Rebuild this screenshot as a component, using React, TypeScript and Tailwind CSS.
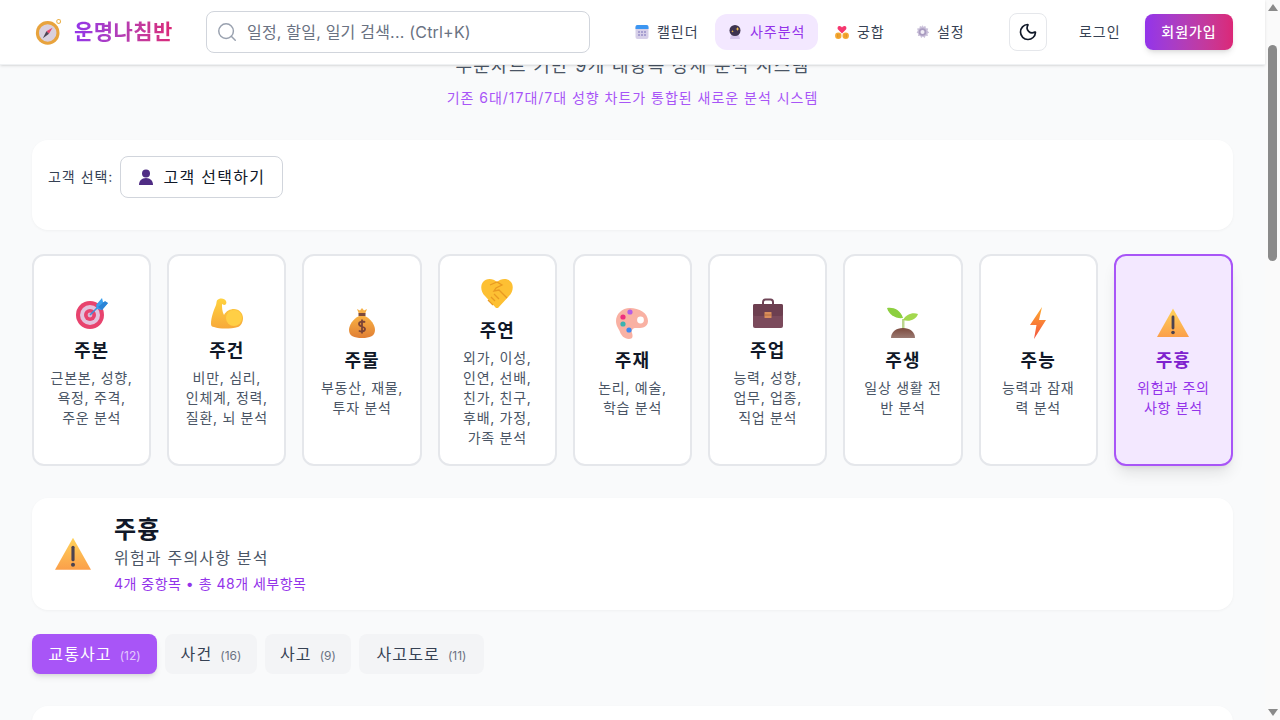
import { Moon, Search } from 'lucide-react';

const CategoryIcons: Record<string, JSX.Element> = {
  target: (
    <svg viewBox="0 0 32 32" className="w-8 h-8">
      <circle cx="14" cy="18" r="14" fill="#e8436e" />
      <circle cx="14" cy="18" r="10" fill="#e3c3de" />
      <circle cx="14" cy="18" r="6" fill="#e8436e" />
      <circle cx="14" cy="18" r="2.4" fill="#d9b6d4" />
      <path d="M14 18 24 8" stroke="#3f8fd8" strokeWidth="1.6" />
      <path d="M20 8 26 1l1 4 5 1-6 7-5-1z" fill="#3aa0ee" />
      <path d="M22 10 29 4l3 2-6 7z" fill="#2b84d6" />
    </svg>
  ),
  arm: (
    <svg viewBox="0 0 32 32" className="w-8 h-8">
      <defs>
        <linearGradient id="armFill" x1="0" y1="0" x2="0" y2="1">
          <stop offset="0" stopColor="#ffd23f" />
          <stop offset="1" stopColor="#f7a93a" />
        </linearGradient>
      </defs>
      <path d="M0 27C0 20 3 13 5 8c1-3 0-5 3-6 3-1 6 0 7 2 1 2 0 4-2 4l-2-1c0 4 0 7 2 11 2-4 6-6 10-6 5 0 9 4 9 9 0 4-2 8-5 9-8 2-18 2-24 0-2 0-3-1-3-3z" fill="url(#armFill)" />
      <circle cx="23" cy="21" r="8" fill="#ffcf45" />
    </svg>
  ),
  money: (
    <svg viewBox="0 0 32 32" className="w-8 h-8">
      <defs>
        <linearGradient id="bagFill" x1="0" y1="0" x2="0" y2="1">
          <stop offset="0" stopColor="#f9b143" />
          <stop offset="1" stopColor="#e07f35" />
        </linearGradient>
      </defs>
      <path d="M11 2l3 1.500L16 1l2 2.500L21 2l-2 5h-6z" fill="#f7b046" />
      <rect x="12.500" y="6" width="7" height="3" fill="#7d4a3a" />
      <path d="M13 9h6c6 3 10 9 10 14 0 6-5 8-13 8S3 29 3 23C3 18 7 12 13 9z" fill="url(#bagFill)" />
      <path d="M19 15.500c-1-1.500-6-1.500-6 1.500s6 2 6 5-5 3-6 1.500M16 12.500v14" stroke="#7b4336" strokeWidth="1.800" fill="none" />
    </svg>
  ),
  shake: (
    <svg viewBox="0 0 32 32" className="w-8 h-8">
      <path d="M16 5C20 1 27 1 30 5c3 4 2 10-2 14L17 31h-2L4 19C0 15-1 9 2 5c3-4 10-4 14 0z" fill="#fdc033" />
      <path d="M9 8l7-3 5 3-6 3-2 3 5-1 8 8M10 20l4 4M13 17l5 5M7 23l5 5" stroke="#e99a22" strokeWidth="1.300" fill="none" />
    </svg>
  ),
  palette: (
    <svg viewBox="0 0 32 32" className="w-8 h-8">
      <path d="M14 1C6 1 0 7 0 14c0 5 3 8 4 11 1 3 4 7 9 7 4 0 4-3 3-6-1-3 1-5 4-5 5 0 12 0 12-7C32 6 23 1 14 1z" fill="#f9b1a3" />
      <circle cx="24.500" cy="13" r="3.400" fill="#fff" />
      <circle cx="14" cy="5" r="2.600" fill="#b45ce6" />
      <circle cx="7" cy="10" r="2.600" fill="#ee2f7f" />
      <circle cx="7" cy="17" r="2.600" fill="#3bb3b0" />
      <circle cx="13" cy="23" r="2.600" fill="#3b88f0" />
    </svg>
  ),
  case: (
    <svg viewBox="0 0 32 32" className="w-8 h-8">
      <path d="M11 8V5c0-1.500 1-2.500 2.500-2.500h5C20 2.500 21 3.500 21 5v3" stroke="#6f4557" strokeWidth="2" fill="none" />
      <rect x="1" y="7" width="30" height="24" rx="2" fill="#7b4a5c" />
      <rect x="1" y="7" width="30" height="12" rx="2" fill="#6d3f50" />
      <rect x="12.500" y="15" width="7" height="6" rx="0.500" fill="#d98d5b" />
      <path d="M12.500 18h7" stroke="#b26a3f" />
    </svg>
  ),
  sprout: (
    <svg viewBox="0 0 32 32" className="w-8 h-8">
      <defs>
        <linearGradient id="soilFill" x1="0" y1="0" x2="0" y2="1">
          <stop offset="0" stopColor="#7c4a3e" />
          <stop offset="1" stopColor="#9b7a72" />
        </linearGradient>
      </defs>
      <path d="M15 12h2.500v10H15z" fill="#bcd68f" />
      <path d="M0 1c6-1 13 1 16 10C9 12 2 8 0 1z" fill="#8ccf3f" />
      <path d="M31 7c-5-2-12 0-15 6 6 2 13 0 15-6z" fill="#a3d84e" />
      <path d="M4 31c0-6 5-10 12-10s12 4 12 10z" fill="url(#soilFill)" />
    </svg>
  ),
  bolt: (
    <svg viewBox="0 0 32 32" className="w-8 h-8">
      <defs>
        <linearGradient id="boltFill" x1="0" y1="0" x2="0" y2="1">
          <stop offset="0" stopColor="#fdab2f" />
          <stop offset="1" stopColor="#f4523f" />
        </linearGradient>
      </defs>
      <path d="M20 0 8 18h6.500L12 32l12-19h-7z" fill="url(#boltFill)" />
    </svg>
  ),
};

function Warning({ className }: { className: string }) {
  return (
    <svg viewBox="0 0 32 32" className={className}>
      <defs>
        <linearGradient id="warnFill" x1="0" y1="0" x2="0" y2="1">
          <stop offset="0" stopColor="#ffd35a" />
          <stop offset="1" stopColor="#fb9f4a" />
        </linearGradient>
      </defs>
      <path d="M16 1.500 32 30H0z" fill="url(#warnFill)" />
      <path d="M16 10v11" stroke="#4b4350" strokeWidth="2.800" strokeLinecap="round" />
      <circle cx="16" cy="25.500" r="1.800" fill="#4b4350" />
    </svg>
  );
}

const categories = [
  { name: '주본', desc: '근본본, 성향, 욕정, 주격, 주운 분석', icon: CategoryIcons.target },
  { name: '주건', desc: '비만, 심리, 인체계, 정력, 질환, 뇌 분석', icon: CategoryIcons.arm },
  { name: '주물', desc: '부동산, 재물, 투자 분석', icon: CategoryIcons.money },
  { name: '주연', desc: '외가, 이성, 인연, 선배, 친가, 친구, 후배, 가정, 가족 분석', icon: CategoryIcons.shake },
  { name: '주재', desc: '논리, 예술, 학습 분석', icon: CategoryIcons.palette },
  { name: '주업', desc: '능력, 성향, 업무, 업종, 직업 분석', icon: CategoryIcons.case },
  { name: '주생', desc: '일상 생활 전반 분석', icon: CategoryIcons.sprout },
  { name: '주능', desc: '능력과 잠재력 분석', icon: CategoryIcons.bolt },
];

const tabs = [
  { name: '교통사고', count: 12, width: 'w-[125px]', active: true },
  { name: '사건', count: 16, width: 'w-[92px]' },
  { name: '사고', count: 9, width: 'w-[86px]' },
  { name: '사고도로', count: 11, width: 'w-[125px]' },
];

function CalendarIcon() {
  return (
    <svg viewBox="0 0 16 16" className="w-4 h-4">
      <rect x="1.500" y="1" width="13" height="14" rx="2" fill="#d6cfe8" />
      <path d="M1.500 3a2 2 0 0 1 2-2h9a2 2 0 0 1 2 2v2h-13z" fill="#3b96f2" />
      <path d="M4 7h2v2H4zm3 0h2v2H7zm3 0h2v2h-2zm-6 3h2v2H4zm3 0h2v2H7zm3 0h2v2h-2z" fill="#a79fd0" />
    </svg>
  );
}

function BallIcon() {
  return (
    <svg viewBox="0 0 16 16" className="w-4 h-4">
      <path d="M4 11h8l1 4H3z" fill="#d8c8ee" />
      <circle cx="8" cy="6.500" r="5.500" fill="#3d3350" />
      <path d="M10.500 3l.7 1.500 1.500.5-1.500.6-.7 1.400-.6-1.400L8.500 5l1.400-.5zM5.500 6l.4.900.9.400-.9.400-.4.900-.4-.9-.9-.4.9-.4z" fill="#f2c14e" />
    </svg>
  );
}

function HeartHandsIcon() {
  return (
    <svg viewBox="0 0 16 16" className="w-4 h-4">
      <path d="M8 9.500 4.300 5.800C3 4.500 3.500 2 5.500 2 6.800 2 7.600 2.800 8 3.600 8.400 2.800 9.200 2 10.500 2c2 0 2.500 2.500 1.200 3.800z" fill="#f5376f" />
      <circle cx="4.300" cy="11.800" r="3.200" fill="#f5a833" />
      <circle cx="11.700" cy="11.800" r="3.200" fill="#f5a833" />
      <path d="M3.500 10v3.500M5 10v3.500M11 10v3.500M12.500 10v3.500" stroke="#d98a1f" strokeWidth="0.600" />
    </svg>
  );
}

function GearIcon() {
  return (
    <svg viewBox="0 0 16 16" className="w-4 h-4">
      <path d="M8 .800l1.200 2 2.200-.9.500 2.300 2.300.4-.7 2.200L15.200 8.500l-1.800 1.200.5 2.200-2.300-.1-.9 2.100L8.800 12.500 7.100 13.900l-.9-2.100-2.300.1.500-2.200L2.600 8.500l1.200-1.700-.7-2.200 2.300-.4.500-2.300 2.200.9z" fill="#c9bfd9" />
      <circle cx="8.500" cy="8" r="3.800" fill="#a99cc0" />
      <circle cx="8.500" cy="8" r="2" fill="#f0ecf4" />
    </svg>
  );
}

function CompassIcon() {
  return (
    <svg viewBox="0 0 32 32" className="w-[28px] h-[28px]">
      <circle cx="27" cy="4" r="2.200" fill="none" stroke="#eab04a" strokeWidth="1.200" />
      <circle cx="14.500" cy="17" r="13.500" fill="#e8a33d" />
      <circle cx="14.500" cy="17" r="10" fill="#d9d0de" />
      <path d="M20 11 16 18l-3-3z" fill="#e8456b" />
      <path d="M9 23l4-8 3 3z" fill="#4b4453" />
    </svg>
  );
}

function BustIcon() {
  return (
    <svg viewBox="0 0 16 16" className="w-4 h-4">
      <circle cx="8" cy="4.500" r="4" fill="#4f2c84" />
      <path d="M1 16c0-4 2.500-7 7-7s7 3 7 7z" fill="#4f2c84" />
    </svg>
  );
}

export default function App() {
  return (
    <div className="flex h-[720px] overflow-hidden bg-[#f9fafb] text-gray-900 font-['Inter','Noto_Sans_CJK_KR',sans-serif]">
      <div className="flex flex-col flex-1 min-w-0">
        <header className="relative z-10 h-[65px] shrink-0 bg-white border-b border-gray-200/60 shadow-sm flex items-center pl-[35px] pr-8">
          <div className="flex items-center gap-[11px] w-[171px] shrink-0">
            <CompassIcon />
            <span className="text-[21px] tracking-[0.02em] font-bold bg-gradient-to-r from-[#9333ea] to-[#db2777] bg-clip-text text-transparent whitespace-nowrap">
              운명나침반
            </span>
          </div>
          <div className="w-[384px] h-[42px] border border-gray-300 rounded-lg flex items-center pl-[9px] gap-[9px] shrink-0">
            <Search className="w-[22px] h-[22px] text-gray-400" strokeWidth={1.6} />
            <span className="text-base tracking-[0.2px] text-gray-500 whitespace-nowrap">일정, 할일, 일기 검색... (Ctrl+K)</span>
          </div>
          <nav className="flex items-center gap-1 ml-8 shrink-0 text-sm tracking-[0.07em]">
            <a className="w-[89px] h-9 flex items-center gap-[7px] pl-3 rounded-xl text-gray-700 whitespace-nowrap">
              <CalendarIcon /> 캘린더
            </a>
            <a className="w-[103px] h-9 flex items-center gap-[7px] pl-3 rounded-xl text-[#9333ea] bg-[#f3e8ff] whitespace-nowrap">
              <BallIcon /> 사주분석
            </a>
            <a className="w-[76px] h-9 flex items-center gap-[7px] pl-3 rounded-xl text-gray-700 whitespace-nowrap">
              <HeartHandsIcon /> 궁합
            </a>
            <a className="w-[75px] h-9 flex items-center gap-[7px] pl-3 rounded-xl text-gray-700 whitespace-nowrap">
              <GearIcon /> 설정
            </a>
          </nav>
          <button className="ml-8 w-[38px] h-[38px] shrink-0 border border-gray-200 rounded-lg flex items-center justify-center">
            <Moon className="w-5 h-5 text-gray-900" />
          </button>
          <a className="ml-8 w-[42px] text-sm tracking-[0.07em] text-gray-700 whitespace-nowrap">로그인</a>
          <button className="ml-6 w-[88px] h-9 shrink-0 rounded-lg bg-gradient-to-r from-[#9333ea] to-[#db2777] text-white text-sm tracking-[0.07em] font-medium shadow-md whitespace-nowrap">
            회원가입
          </button>
        </header>

        <main className="flex-1 min-h-0 overflow-hidden px-8">
          <p className="-mt-[13px] text-lg leading-7 tracking-[0.072em] text-gray-600 text-center">
            부분차트 기반 9개 대항목 상세 분석 시스템
          </p>
          <p className="mt-2 text-sm leading-5 tracking-[0.07em] text-[#a855f7] text-center">
            기존 6대/17대/7대 성향 차트가 통합된 새로운 분석 시스템
          </p>

          <section className="mt-8 h-[90px] bg-white rounded-2xl shadow-[0_1px_3px_rgba(0,0,0,0.04)] p-4 flex items-start gap-[7px]">
            <span className="text-sm tracking-[0.07em] text-gray-700 leading-[42px]">고객 선택:</span>
            <button className="h-[42px] w-[163px] border border-gray-300 rounded-lg flex items-center justify-center gap-[9px] text-base tracking-[0.08em] text-gray-900 bg-white">
              <BustIcon /> 고객 선택하기
            </button>
          </section>

          <section className="mt-6 grid grid-cols-9 gap-4">
            {categories.map((c) => (
              <div key={c.name} className="bg-white border-2 border-gray-200 rounded-xl p-4 flex flex-col items-center justify-center text-center">
                <div className="h-10 mb-2 pt-[5px] flex items-start">{c.icon}</div>
                <h3 className="text-lg leading-[22px] pb-[6px] tracking-[0.06em] font-bold text-gray-900">{c.name}</h3>
                <p className="text-sm leading-5 tracking-[0.05em] text-gray-600">{c.desc}</p>
              </div>
            ))}
            <div className="bg-[#f3e8ff] border-2 border-[#a855f7] rounded-xl p-4 shadow-lg flex flex-col items-center justify-center text-center">
              <div className="h-10 mb-2 pt-[5px] flex items-start">
                <Warning className="w-8 h-8" />
              </div>
              <h3 className="text-lg leading-[22px] pb-[6px] tracking-[0.06em] font-bold text-[#7e22ce]">주흉</h3>
              <p className="text-sm leading-5 tracking-[0.05em] text-[#9333ea]">위험과 주의사항 분석</p>
            </div>
          </section>

          <section className="mt-8 bg-white rounded-2xl shadow-[0_1px_3px_rgba(0,0,0,0.04)] py-4 pl-[23px] flex items-center gap-[23px]">
            <Warning className="w-9 h-9 shrink-0" />
            <div>
              <h2 className="text-2xl leading-8 tracking-[0.05em] font-bold text-gray-900">주흉</h2>
              <p className="text-base leading-6 tracking-[0.075em] text-gray-600">위험과 주의사항 분석</p>
              <p className="mt-1 text-sm leading-5 tracking-[0.035em] text-[#9333ea]">4개 중항목 • 총 48개 세부항목</p>
            </div>
          </section>

          <div className="mt-6 flex gap-2">
            {tabs.map((t) => (
              <button
                key={t.name}
                className={
                  t.active
                    ? `${t.width} h-10 rounded-lg bg-[#a855f7] text-white text-base shadow-md whitespace-nowrap`
                    : `${t.width} h-10 rounded-lg bg-gray-100 text-gray-700 text-base whitespace-nowrap`
                }
              >
                <span className="tracking-[0.07em]">{t.name}</span>
                <span className={t.active ? 'ml-2 text-xs text-white/70' : 'ml-2 text-xs text-gray-500'}>({t.count})</span>
              </button>
            ))}
          </div>

          <section className="mt-8 h-16 bg-white rounded-2xl shadow-[0_1px_3px_rgba(0,0,0,0.04)]" />
        </main>
      </div>

      <div className="w-[15px] shrink-0 bg-[#fafafa] flex flex-col items-center justify-between py-1">
        <div className="w-0 h-0 border-x-[5px] border-x-transparent border-b-[7px] border-b-[#8a8a8a]" />
        <div className="absolute top-[45px] w-[9px] h-[216px] rounded-full bg-[#8a8a8a]" />
        <div className="w-0 h-0 border-x-[5px] border-x-transparent border-t-[7px] border-t-[#8a8a8a]" />
      </div>
    </div>
  );
}
